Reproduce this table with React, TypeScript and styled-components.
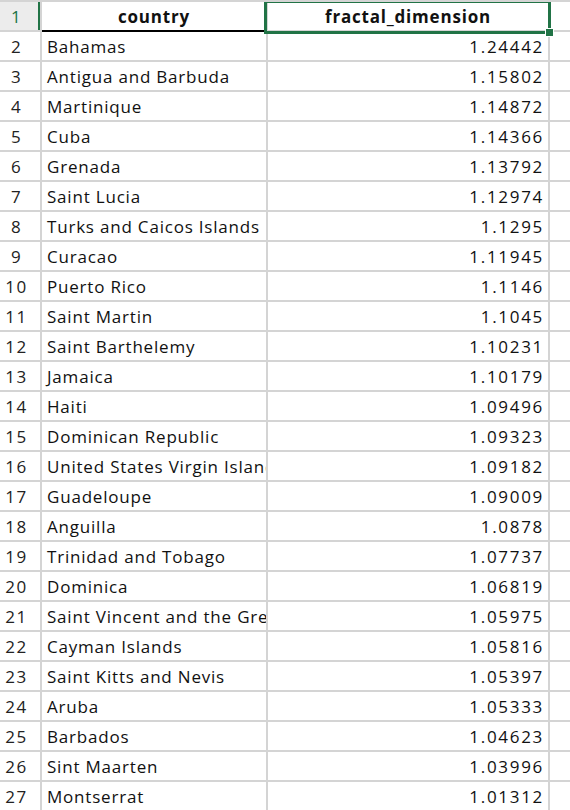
import React from 'react';
import styled, { createGlobalStyle } from 'styled-components';

interface Row {
  country: string;
  value: string;
}

const rows: Row[] = [
  { country: 'Bahamas', value: '1.24442' },
  { country: 'Antigua and Barbuda', value: '1.15802' },
  { country: 'Martinique', value: '1.14872' },
  { country: 'Cuba', value: '1.14366' },
  { country: 'Grenada', value: '1.13792' },
  { country: 'Saint Lucia', value: '1.12974' },
  { country: 'Turks and Caicos Islands', value: '1.1295' },
  { country: 'Curacao', value: '1.11945' },
  { country: 'Puerto Rico', value: '1.1146' },
  { country: 'Saint Martin', value: '1.1045' },
  { country: 'Saint Barthelemy', value: '1.10231' },
  { country: 'Jamaica', value: '1.10179' },
  { country: 'Haiti', value: '1.09496' },
  { country: 'Dominican Republic', value: '1.09323' },
  { country: 'United States Virgin Islands', value: '1.09182' },
  { country: 'Guadeloupe', value: '1.09009' },
  { country: 'Anguilla', value: '1.0878' },
  { country: 'Trinidad and Tobago', value: '1.07737' },
  { country: 'Dominica', value: '1.06819' },
  { country: 'Saint Vincent and the Grenadines', value: '1.05975' },
  { country: 'Cayman Islands', value: '1.05816' },
  { country: 'Saint Kitts and Nevis', value: '1.05397' },
  { country: 'Aruba', value: '1.05333' },
  { country: 'Barbados', value: '1.04623' },
  { country: 'Sint Maarten', value: '1.03996' },
  { country: 'Montserrat', value: '1.01312' },
];

const GlobalStyle = createGlobalStyle`
  html, body {
    margin: 0;
    padding: 0;
    background: #ffffff;
    overflow: hidden;
  }
`;

const Sheet = styled.div`
  position: relative;
  width: 570px;
  height: 810px;
  overflow: hidden;
  border-top: 2px solid #d4d4d4;
  box-sizing: border-box;
  font-family: 'Open Sans', 'Liberation Sans', sans-serif;
  font-size: 17px;
  letter-spacing: 0.8px;
  color: #111111;
`;

const Grid = styled.div`
  display: grid;
  grid-template-columns: 42px 226px 282px 40px;
  grid-auto-rows: 30px;
`;

const Cell = styled.div<{ $align?: 'left' | 'right' | 'center'; $bold?: boolean; $headerLine?: boolean; $digits?: boolean }>`
  box-sizing: border-box;
  display: flex;
  align-items: center;
  justify-content: ${(p) => (p.$align === 'right' ? 'flex-end' : p.$align === 'center' ? 'center' : 'flex-start')};
  padding: 1px ${(p) => (p.$digits ? '4px' : '5px')} 0 5px;
  border-right: 2px solid #d4d4d4;
  border-bottom: 2px solid ${(p) => (p.$headerLine ? '#000000' : '#d4d4d4')};
  font-weight: ${(p) => (p.$bold ? 700 : 400)};
  letter-spacing: ${(p) => (p.$digits ? '1.7px' : '0.8px')};
  white-space: nowrap;
  overflow: hidden;
`;

const RowHead = styled.div<{ $active?: boolean }>`
  box-sizing: border-box;
  display: flex;
  align-items: center;
  justify-content: center;
  padding: 1px 7px 0 0;
  border-right: 2px solid #d4d4d4;
  border-bottom: 2px solid #d4d4d4;
  letter-spacing: 1.5px;
  background: ${(p) => (p.$active ? '#ececec' : '#ffffff')};
  box-shadow: ${(p) => (p.$active ? 'inset -2px 0 0 #217346' : 'none')};
  color: ${(p) => (p.$active ? '#217346' : '#222222')};
`;

const Selection = styled.div`
  position: absolute;
  left: 264px;
  top: -2px;
  width: 287px;
  height: 34px;
  box-sizing: border-box;
  border: 3px solid #217346;
  pointer-events: none;
`;

const Handle = styled.div`
  position: absolute;
  right: -6px;
  bottom: -6px;
  width: 7px;
  height: 7px;
  background: #217346;
  border: 1px solid #ffffff;
`;

const App: React.FC = () => {
  return (
    <Sheet>
      <GlobalStyle />
      <Grid>
        <RowHead $active>1</RowHead>
        <Cell $align="center" $bold $headerLine>
          country
        </Cell>
        <Cell $align="center" $bold>
          fractal_dimension
        </Cell>
        <Cell />
        {rows.map((row, i) => (
          <React.Fragment key={row.country}>
            <RowHead>{i + 2}</RowHead>
            <Cell>{row.country}</Cell>
            <Cell $align="right" $digits>
              {row.value}
            </Cell>
            <Cell />
          </React.Fragment>
        ))}
      </Grid>
      <Selection>
        <Handle />
      </Selection>
    </Sheet>
  );
};

export default App;
